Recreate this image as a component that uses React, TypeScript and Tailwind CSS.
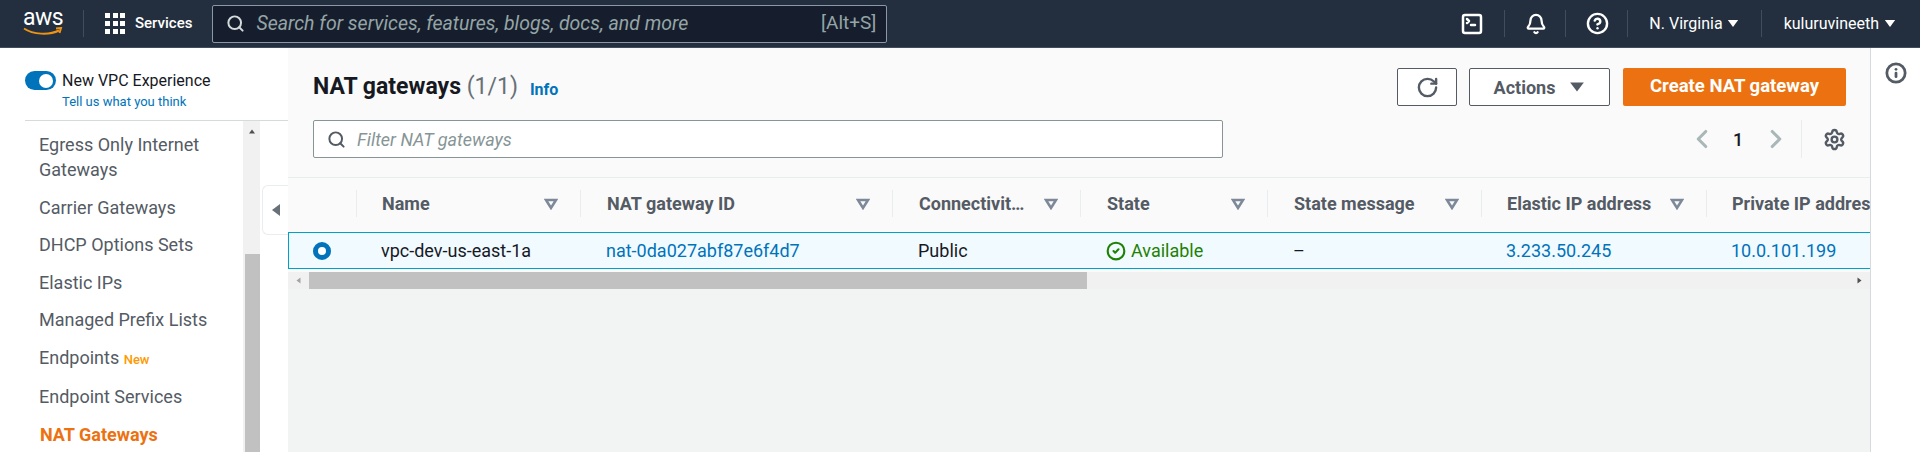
import React from 'react';
import { Bell, ChevronLeft, ChevronRight, CircleCheck, CircleHelp, Info, RotateCw, Search, Settings, SquareTerminal } from 'lucide-react';

const Caret = ({ className }: { className: string }) => (
    <svg viewBox="0 0 14 10" className={className} fill="currentColor"><path d="M1 1h12L7 9z" /></svg>
);

const SortIcon = () => (
    <svg viewBox="0 0 14 12" className="w-[14px] h-[12px] text-[#7d8998]" fill="none" stroke="currentColor" strokeWidth="2.500"><path d="M2 2h10L7 10z" /></svg>
);

const Divider = () => <div className="w-px h-[27px] bg-[#414d5c]" />;

const AwsLogo = () => (
    <div className="w-[40px] flex flex-col items-center text-white">
        <span className="text-[23px] leading-[16px] tracking-[-0.5px] font-normal">aws</span>
        <svg viewBox="0 0 40 10" className="w-[40px] h-[10px] mt-[1px]" fill="none" stroke="#ec9215" strokeWidth="2">
            <path d="M1 1.5C10 7.5 26 8.5 36 3.5" />
            <path d="M33 1.5l5-.5-1.500 5" />
        </svg>
    </div>
);

const Header = () => (
    <header className="h-[48px] bg-[#232f3e] border-b border-[#414d5c] flex items-center pl-[23px] pr-[24px] shrink-0">
        <AwsLogo />
        <div className="ml-[20px]"><Divider /></div>
        <div className="ml-[21px] grid grid-cols-3 gap-[3px] w-[20px]">
            {Array.from({ length: 9 }).map((_, i) => <span key={i} className="w-[5px] h-[5px] bg-white" />)}
        </div>
        <span className="ml-[10px] text-white text-[15px] font-medium">Services</span>
        <div className="ml-[20px] w-[675px] h-[38px] bg-[#161e2d] border border-[#8a97a5] rounded-[2px] flex items-center pl-[13px] pr-[10px]">
            <Search className="w-[19px] h-[19px] text-[#d5dbdb]" strokeWidth={2.5} />
            <span className="ml-[11px] italic text-[#95a5a6] text-[19.5px] whitespace-nowrap">Search for services, features, blogs, docs, and more</span>
            <span className="ml-auto text-[#95a5a6] text-[19px]">[Alt+S]</span>
        </div>
        <div className="ml-auto flex items-center">
            <SquareTerminal className="w-[24px] h-[24px] text-white" strokeWidth={2.5} />
            <div className="ml-[20px]"><Divider /></div>
            <Bell className="ml-[20px] w-[22px] h-[22px] text-white" strokeWidth={2.5} />
            <div className="ml-[18px]"><Divider /></div>
            <CircleHelp className="ml-[20px] w-[23px] h-[23px] text-white" strokeWidth={2.5} />
            <div className="ml-[18px]"><Divider /></div>
            <span className="ml-[21px] text-white text-[16px]">N. Virginia</span>
            <Caret className="ml-[4px] w-[12px] h-[9px] text-white" />
            <div className="ml-[22px]"><Divider /></div>
            <span className="ml-[22px] text-white text-[16px]">kuluruvineeth</span>
            <Caret className="ml-[5px] w-[12px] h-[9px] text-white" />
        </div>
    </header>
);

const Sidebar = () => {
    const items = ['Carrier Gateways', 'DHCP Options Sets', 'Elastic IPs', 'Managed Prefix Lists'];
    return (
        <aside className="w-[288px] bg-white shrink-0 flex flex-col overflow-hidden">
            <div className="ml-[25px] h-[73px] border-b border-[#d5dbdb] pt-[23px] shrink-0">
                <div className="flex items-center gap-[6px]">
                    <div className="w-[31px] h-[19px] rounded-full bg-[#0073bb] flex items-center justify-end pr-[3px]">
                        <span className="w-[14px] h-[14px] rounded-full bg-white" />
                    </div>
                    <span className="text-[16px] text-[#16191f] leading-[19px]">New VPC Experience</span>
                </div>
                <p className="ml-[37px] mt-[2px] text-[13px] text-[#0073bb] leading-[20px]">Tell us what you think</p>
            </div>
            <div className="flex flex-1 overflow-hidden">
                <nav className="w-[243px] pl-[39px] pt-[11px] flex flex-col gap-[12.5px] text-[18px] leading-[25px] text-[#545b64]">
                    <span>Egress Only Internet<br />Gateways</span>
                    {items.map((item) => <span key={item}>{item}</span>)}
                    <span>Endpoints <span className="text-[13px] font-medium text-[#ff9900]">New</span></span>
                    <span>Endpoint Services</span>
                    <span className="ml-[1px] font-bold text-[#ec7211]">NAT Gateways</span>
                </nav>
                <div className="w-[17px] bg-[#f1f1f1] flex flex-col">
                    <div className="h-[133px] flex justify-center pt-[8px]">
                        <Caret className="w-[8px] h-[5px] rotate-180 text-[#505050]" />
                    </div>
                    <div className="flex-1 ml-[2px] bg-[#c1c1c1]" />
                </div>
            </div>
        </aside>
    );
};

const cols = 'grid grid-cols-[69px_224px_312px_188px_187px_214px_225px_240px] w-[1659px]';

const Head = ({ label, sort = true, pad = 'pl-[26px]' }: { label: string, sort?: boolean, pad?: string }) => (
    <div className={`h-[27px] flex items-center justify-between pr-[22px] border-r border-[#eaeded] ${pad}`}>
        <span className="font-bold text-[#545b64] text-[18px] leading-[24px] whitespace-nowrap">{label}</span>
        {sort && <SortIcon />}
    </div>
);

const Cell = ({ children, className = '' }: { children: React.ReactNode, className?: string }) => (
    <div className={`flex items-center text-[18px] whitespace-nowrap ${className}`}>{children}</div>
);

const NatTable = () => (
    <div className="mt-[19px] flex-1 overflow-hidden flex flex-col">
        <div className="h-[55px] border-t border-[#eaeded] bg-[#fafafa] shrink-0 flex items-start pt-[12px]">
            <div className={cols}>
                <div className="h-[27px] border-r border-[#eaeded]" />
                <Head label="Name" pad="pl-[25px]" />
                <Head label="NAT gateway ID" />
                <Head label="Connectivit…" />
                <Head label="State" />
                <Head label="State message" />
                <Head label="Elastic IP address" pad="pl-[25px]" />
                <Head label="Private IP address" sort={false} pad="pl-[25px]" />
            </div>
        </div>
        <div className="h-[37px] bg-[#f1faff] border-y border-l border-[#00a1c9] shrink-0 overflow-hidden">
            <div className={`${cols} h-[35px] -ml-px`}>
                <div className="flex items-center pl-[25px]">
                    <span className="w-[18px] h-[18px] rounded-full border-[5px] border-[#0073bb] bg-white" />
                </div>
                <Cell className="pl-[24px] text-[#16191f]">vpc-dev-us-east-1a</Cell>
                <Cell className="pl-[25px] text-[#0073bb]">nat-0da027abf87e6f4d7</Cell>
                <Cell className="pl-[25px] text-[#16191f]">Public</Cell>
                <Cell className="pl-[25px] text-[#1d8102] gap-[5px]"><CircleCheck className="w-[20px] h-[20px]" strokeWidth={2.5} />Available</Cell>
                <Cell className="pl-[25px] text-[#16191f]">–</Cell>
                <Cell className="pl-[24px] text-[#0073bb]">3.233.50.245</Cell>
                <Cell className="pl-[24px] text-[#0073bb]">10.0.101.199</Cell>
            </div>
        </div>
        <div className="flex-1 bg-[#f2f3f3]">
            <div className="bg-[#fafafa] h-[3px]" />
            <div className="h-[17px] bg-[#f1f1f1] flex items-center">
                <div className="w-[21px] flex justify-center"><Caret className="w-[7px] h-[5px] rotate-90 text-[#a3a3a3]" /></div>
                <div className="w-[778px] h-[17px] bg-[#c1c1c1]" />
                <div className="ml-auto w-[21px] flex justify-center"><Caret className="w-[7px] h-[5px] -rotate-90 text-[#505050]" /></div>
            </div>
        </div>
    </div>
);

const Main = () => (
    <main className="relative flex-1 flex flex-col min-w-0">
        <div className="absolute -left-[26px] top-[137px] w-[26px] h-[50px] bg-white border border-r-0 border-[#eaeded] rounded-l-[6px] flex items-center justify-center">
            <Caret className="w-[14px] h-[10px] rotate-90 text-[#687078]" />
        </div>
        <div className="bg-[#fafafa] flex flex-col flex-1">
            <div className="h-[72px] pl-[25px] pr-[24px] pt-[20px] flex shrink-0">
                <h1 className="text-[23px] leading-[38px] font-bold text-[#16191f]">NAT gateways <span className="font-normal text-[#687078]">(1/1)</span></h1>
                <a className="ml-[12px] mt-[3px] text-[16px] leading-[38px] font-bold text-[#0073bb]">Info</a>
                <div className="ml-auto flex">
                    <button className="w-[60px] h-[38px] bg-white border border-[#545b64] rounded-[2px] flex items-center justify-center">
                        <RotateCw className="w-[23px] h-[23px] text-[#545b64]" strokeWidth={2.5} />
                    </button>
                    <button className="ml-[12px] w-[141px] h-[38px] bg-white border border-[#545b64] rounded-[2px] flex items-center justify-center gap-[14px] font-bold text-[18px] text-[#545b64]">
                        Actions <Caret className="w-[16px] h-[12px] text-[#545b64]" />
                    </button>
                    <button className="ml-[13px] w-[223px] h-[38px] bg-[#ec7211] rounded-[2px] font-bold text-[18.5px] text-white">Create NAT gateway</button>
                </div>
            </div>
            <div className="pl-[25px] pr-[24px] flex items-center h-[38px] shrink-0">
                <div className="w-[910px] h-[38px] bg-white border border-[#879596] rounded-[2px] flex items-center pl-[13px]">
                    <Search className="w-[19px] h-[19px] text-[#545b64]" strokeWidth={2.5} />
                    <span className="ml-[11px] italic text-[18px] text-[#879596]">Filter NAT gateways</span>
                </div>
                <div className="ml-auto flex items-center">
                    <ChevronLeft className="w-[30px] h-[30px] text-[#aab7b8]" strokeWidth={2.5} />
                    <span className="ml-[15px] w-[12px] text-[18px] font-medium text-[#16191f] text-center">1</span>
                    <ChevronRight className="ml-[17px] w-[30px] h-[30px] text-[#aab7b8]" strokeWidth={2.5} />
                    <div className="ml-[10px] w-px h-[38px] bg-[#eaeded]" />
                    <Settings className="ml-[21px] w-[23px] h-[23px] text-[#545b64]" strokeWidth={2.5} />
                </div>
            </div>
            <NatTable />
        </div>
    </main>
);

const App: React.FC = () => (
    <div className="w-[1920px] h-[452px] overflow-hidden flex flex-col font-['Roboto','Liberation_Sans',sans-serif]">
        <Header />
        <div className="flex flex-1 min-h-0">
            <Sidebar />
            <Main />
            <div className="w-[50px] bg-white border-l border-[#d5dbdb] flex justify-center pt-[14px] shrink-0">
                <Info className="w-[22px] h-[22px] text-[#545b64]" strokeWidth={3} />
            </div>
        </div>
    </div>
);

export default App;
